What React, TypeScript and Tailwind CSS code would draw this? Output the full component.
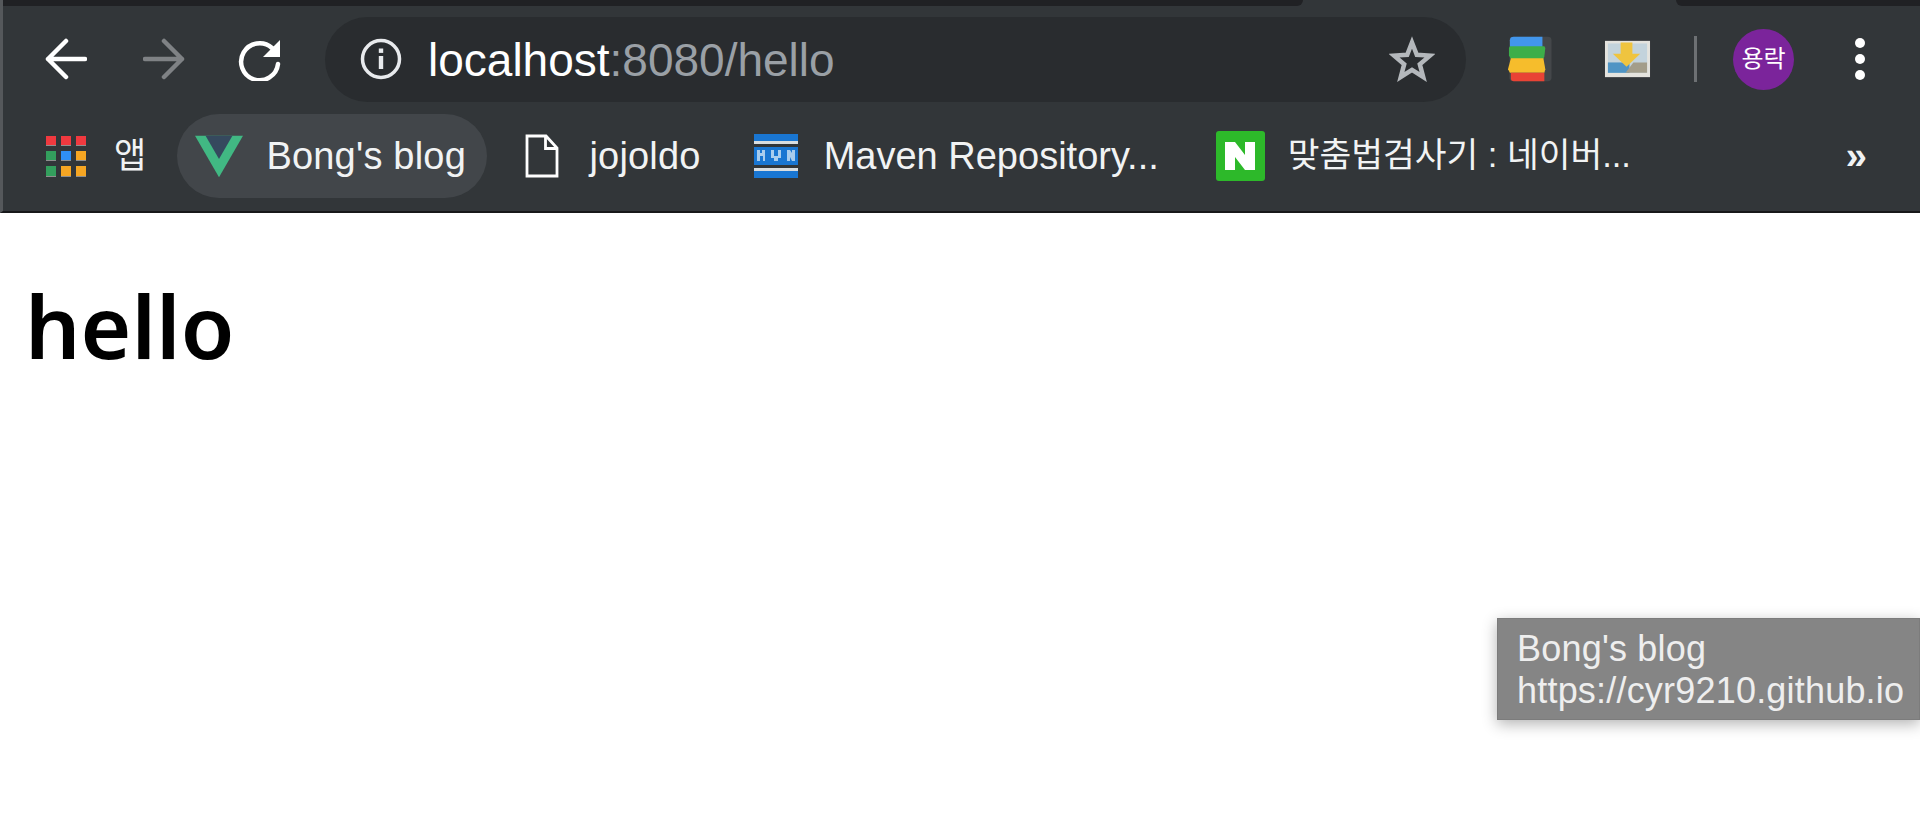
import React from "react";

function BackIcon({ className }: { className: string }) {
  return (
    <svg viewBox="0 0 42 42" className={className} fill="none" stroke="currentColor" strokeWidth="4.5" strokeLinecap="round" strokeLinejoin="round">
      <path d="M40 21H3M21 3 3 21l18 18" />
    </svg>
  );
}

function ForwardIcon({ className }: { className: string }) {
  return (
    <svg viewBox="0 0 42 42" className={className} fill="none" stroke="currentColor" strokeWidth="4.5" strokeLinecap="round" strokeLinejoin="round">
      <path d="M2 21h37M21 3l18 18-18 18" />
    </svg>
  );
}

function ReloadIcon() {
  return (
    <svg viewBox="0 0 44 44" className="h-[44px] w-[44px] text-white" fill="none">
      <path d="M34 11A18.5 18.5 0 1 0 40 27" stroke="currentColor" strokeWidth="4.5" strokeLinecap="round" />
      <path d="M42 3v17H25z" fill="currentColor" />
    </svg>
  );
}

function InfoIcon() {
  return (
    <svg viewBox="0 0 42 42" className="h-[42px] w-[42px] text-[#e8eaed]" fill="none">
      <circle cx="21" cy="21" r="18.5" stroke="currentColor" strokeWidth="3.5" />
      <rect x="18.8" y="18" width="4.4" height="13" fill="currentColor" />
      <rect x="18.8" y="10.5" width="4.4" height="4.4" fill="currentColor" />
    </svg>
  );
}

function StarIcon() {
  return (
    <svg viewBox="0 0 46 46" className="h-[46px] w-[46px] text-[#b4b8bc]" fill="none" stroke="currentColor" strokeWidth="4.5" strokeLinejoin="miter">
      <path d="M23 6.5 27.8 18.8 41 19.6 30.8 28.2 34.2 41 23 33.8 11.8 41 15.2 28.2 5 19.6 18.2 18.8Z" />
    </svg>
  );
}

function StackExtension() {
  return (
    <svg viewBox="0 0 46 54" className="h-[46px] w-[44px]" preserveAspectRatio="none">
      <rect x="1.5" y="1" width="44" height="52" rx="4" fill="#44474a" />
      <path d="M2 5a4 4 0 0 1 4-4h30v13H2z" fill="#4296ec" />
      <path d="M2 12h36l1 2-1 10-1 3H3l-2-4v-9z" fill="#3dae49" />
      <path d="M3 26h34l2 13-1 4H2l-2-4z" fill="#f6bd2c" />
      <path d="M3 43h35v10H6a3 3 0 0 1-3-3z" fill="#e94335" />
    </svg>
  );
}

function ImageExtension() {
  return (
    <svg viewBox="0 0 48 44" className="h-[38px] w-[47px]" preserveAspectRatio="none">
      <rect x="1" y="1" width="46" height="42" fill="#e4e3de" />
      <rect x="4" y="4" width="40" height="34" fill="#c3d3dc" />
      <rect x="4" y="26" width="22" height="12" fill="#4f94c4" />
      <path d="M22 38 30 26h14v12z" fill="#a39d8a" />
      <path d="M17 3h12v13h8L23 31 9 16h8z" fill="#efc43f" />
    </svg>
  );
}

function Kebab() {
  return (
    <div className="flex flex-col gap-[6px]">
      <span className="h-[10px] w-[10px] rounded-full bg-white" />
      <span className="h-[10px] w-[10px] rounded-full bg-white" />
      <span className="h-[10px] w-[10px] rounded-full bg-white" />
    </div>
  );
}

function AppsIcon() {
  const colors = ["#f0393f", "#f0393f", "#f0393f", "#339f5d", "#2f8ff5", "#f6a623", "#339f5d", "#f6a623", "#f6a623"];
  return (
    <div className="grid h-[41px] w-[40px] grid-cols-3 gap-[5px]">
      {colors.map((c, i) => (
        <span key={i} className="block border-b border-b-[#8f8f8f]" style={{ background: c }} />
      ))}
    </div>
  );
}

function VueIcon() {
  return (
    <svg viewBox="0 0 50 43" className="h-[43px] w-[48px]">
      <path d="M0 0h50L25 43z" fill="#41b883" />
      <path d="M11 0h28L25 24z" fill="#35495e" />
    </svg>
  );
}

function FileIcon() {
  return (
    <svg viewBox="0 0 34 44" className="h-[44px] w-[34px] text-white" fill="none" stroke="currentColor" strokeWidth="2.8">
      <path d="M2 2h19l11 12v28H2z" />
      <path d="M20.5 2v12.5H32" />
    </svg>
  );
}

function MavenIcon() {
  return (
    <svg viewBox="0 0 44 44" className="h-[44px] w-[44px]">
      <rect width="44" height="7" fill="#1976d2" />
      <rect y="7" width="44" height="3" fill="#d8dde0" />
      <rect y="13" width="44" height="18" fill="#1976d2" />
      <path d="M3 16h3v3h2v-3h3v11H9v-5H6v5H3zM17 16h3v6h4v-6h3v8h-3v3h-4v-3h-3zM33 16h3l2 3v-3h3v11h-3l-2-4v4h-3z" fill="#a9cdee" />
      <rect y="34" width="44" height="3" fill="#d8dde0" />
      <rect y="37" width="44" height="7" fill="#1976d2" />
    </svg>
  );
}

function NaverIcon() {
  return (
    <div className="flex h-[50px] w-[49px] items-center justify-center rounded-[3px] bg-[#2db92a]">
      <svg viewBox="0 0 30 28" className="h-[28px] w-[30px]">
        <path d="M0 0h10l10 13V0h10v28H20L10 15v13H0z" fill="#ffffff" />
      </svg>
    </div>
  );
}

export default function App() {
  return (
    <div className="relative h-[840px] w-[1920px] overflow-hidden bg-white font-['Liberation_Sans','Noto_Sans_CJK_KR',sans-serif]">
      <div className="border-b-2 border-[#17181a] border-l-[3px] border-l-[#55585b] bg-[#323639]">
        <div className="flex h-[6px]">
          <div className="w-[1300px] rounded-br-[10px] bg-[#202124]" />
          <div className="ml-auto w-[244px] rounded-bl-[10px] bg-[#202124]" />
        </div>

        <div className="flex h-[108px] items-center pb-[2px]">
          <div className="ml-[42px] text-white"><BackIcon className="h-[42px] w-[42px]" /></div>
          <div className="ml-[56px] text-[#7f8285]"><ForwardIcon className="h-[42px] w-[42px]" /></div>
          <div className="ml-[53px]"><ReloadIcon /></div>
          <div className="ml-[43px] flex h-[85px] w-[1141px] items-center rounded-full bg-[#292c2f] pl-[35px] pr-[31px]">
            <InfoIcon />
            <div className="ml-[26px] pt-[3px] text-[46px] text-white">
              localhost<span className="text-[#9aa0a6]">:8080/hello</span>
            </div>
            <div className="ml-auto"><StarIcon /></div>
          </div>
          <div className="ml-[42px]"><StackExtension /></div>
          <div className="ml-[52px]"><ImageExtension /></div>
          <div className="ml-[43px] h-[46px] w-[3px] bg-[#6d7073]" />
          <div className="ml-[36px] flex h-[61px] w-[61px] items-center justify-center rounded-full bg-[#7b249b] text-[24px] text-white">
            용락
          </div>
          <div className="ml-[61px]"><Kebab /></div>
        </div>

        <div className="flex h-[84px] items-center text-[38px] tracking-[0.2px] text-[#f1f3f4]">
          <div className="ml-[43px]"><AppsIcon /></div>
          <span className="ml-[28px] text-[35px]">앱</span>
          <div className="ml-[31px] flex h-[84px] w-[310px] items-center rounded-full bg-[#42464a] pl-[18px]">
            <VueIcon />
            <span className="ml-[23px]">Bong's blog</span>
          </div>
          <div className="ml-[38px]"><FileIcon /></div>
          <span className="ml-[30px]">jojoldo</span>
          <div className="ml-[53px]"><MavenIcon /></div>
          <span className="ml-[26px] tracking-normal">Maven Repository...</span>
          <div className="ml-[57px]"><NaverIcon /></div>
          <span className="ml-[23px] text-[34.5px] tracking-normal">맞춤법검사기 : 네이버...</span>
          <span className="ml-auto mr-[53px] font-bold">»</span>
        </div>
        <div className="h-[13px]" />
      </div>

      <h1 className="ml-[25px] mt-[60px] font-['Noto_Sans','Noto_Sans_CJK_KR',sans-serif] text-[87px] font-semibold leading-[1.2] text-black">
        hello
      </h1>

      <div className="absolute right-0 top-[618px] h-[102px] w-[423px] border border-[#7c7c7c] bg-[#858585] pl-[19px] pt-[9px] text-[36px] leading-[42px] tracking-[0.2px] text-[#eeeeee] shadow-[0_4px_14px_rgba(0,0,0,0.3)]">
        <div>Bong's blog</div>
        <div>https://cyr9210.github.io</div>
      </div>
    </div>
  );
}
